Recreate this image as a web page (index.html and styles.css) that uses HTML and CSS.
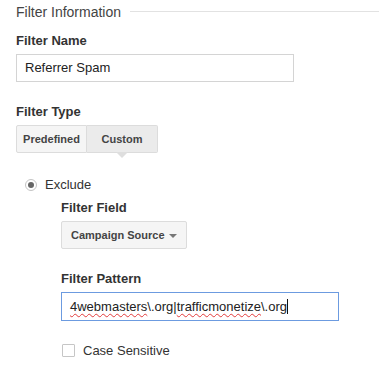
FILE: index.html
```html
<!DOCTYPE html>
<html lang="en">
<head>
    <meta charset="UTF-8">
    <title>Filter Information</title>
    <link rel="stylesheet" href="styles.css">
</head>
<body>
    <div class="legend">
        <span class="legend-text">Filter Information</span>
        <span class="legend-line"></span>
    </div>

    <div class="field-label first">Filter Name</div>
    <div class="text-input">Referrer Spam</div>

    <div class="field-label">Filter Type</div>
    <div class="segmented">
        <button class="seg-btn">Predefined</button>
        <button class="seg-btn active">Custom</button>
    </div>

    <div class="radio-row">
        <span class="radio"></span>
        <span class="radio-label">Exclude</span>
    </div>

    <div class="sub-options">
        <div class="field-label tight">Filter Field</div>
        <div class="select">
            <span>Campaign Source</span>
            <span class="select-arrow"></span>
        </div>

        <div class="field-label">Filter Pattern</div>
        <div class="text-input pattern"><span class="misspelled">4webmasters</span>\.org|<span class="misspelled">trafficmonetize</span>\.org<span class="caret"></span></div>

        <div class="check-row">
            <span class="checkbox"></span>
            <span class="check-label">Case Sensitive</span>
        </div>
    </div>
</body>
</html>
```

FILE: styles.css
```css
body {
    margin: 0;
    padding: 4px 0 0 16px;
    background: #fff;
    font-family: "Liberation Sans", Arial, sans-serif;
    color: #333;
}

.legend {
    display: flex;
    align-items: center;
    gap: 9px;
    height: 16px;
}

.legend-text {
    font-size: 14px;
    line-height: 16px;
    color: #444;
}

.legend-line {
    flex: 1;
    border-top: 1px solid #e2e2e2;
    margin-top: -1px;
}

.field-label {
    font-size: 13px;
    line-height: 15px;
    font-weight: bold;
    color: #333;
    margin-top: 22px;
}

.field-label.first {
    margin-top: 13px;
}

.field-label.tight {
    margin-top: 8px;
}

.text-input {
    box-sizing: border-box;
    width: 278px;
    height: 28px;
    margin-top: 6px;
    border: 1px solid #d4d4d4;
    padding: 0 8px;
    font-size: 13px;
    line-height: 26px;
    color: #222;
    white-space: nowrap;
}

.text-input.pattern {
    height: 29px;
    line-height: 27px;
    border-color: #6c9be0;
}

.misspelled {
    text-decoration: underline wavy #e23b3b;
    text-decoration-thickness: 1px;
    text-underline-offset: 2px;
}

.caret {
    display: inline-block;
    width: 1px;
    height: 15px;
    background: #111;
    vertical-align: -3px;
}

.segmented {
    display: flex;
    margin-top: 6px;
}

.seg-btn {
    position: relative;
    width: 71px;
    height: 28px;
    padding: 0;
    margin: 0;
    border: 1px solid #dcdcdc;
    background: #f5f5f5;
    font-family: inherit;
    font-size: 11px;
    font-weight: bold;
    color: #444;
    border-radius: 2px 0 0 2px;
}

.seg-btn.active {
    background: #ebebeb;
    border-left: none;
    border-radius: 0 2px 2px 0;
}

.seg-btn.active::after {
    content: "";
    position: absolute;
    left: 50%;
    bottom: -6px;
    margin-left: -6px;
    border-left: 6px solid transparent;
    border-right: 6px solid transparent;
    border-top: 6px solid #dedede;
}

.radio-row {
    display: flex;
    align-items: center;
    gap: 8px;
    margin-top: 24px;
    padding-left: 9px;
}

.radio {
    box-sizing: border-box;
    width: 12px;
    height: 12px;
    border: 1px solid #c4c4c4;
    border-radius: 50%;
    display: flex;
    align-items: center;
    justify-content: center;
}

.radio::after {
    content: "";
    width: 6px;
    height: 6px;
    border-radius: 50%;
    background: #666;
}

.radio-label,
.check-label {
    font-size: 13px;
    line-height: 15px;
    color: #333;
}

.sub-options {
    padding-left: 45px;
}

.select {
    box-sizing: border-box;
    width: 126px;
    height: 28px;
    margin-top: 6px;
    padding: 0 9px;
    border: 1px solid #dcdcdc;
    border-radius: 2px;
    background: #f5f5f5;
    display: flex;
    align-items: center;
    justify-content: space-between;
    font-size: 11px;
    font-weight: bold;
    color: #444;
}

.select-arrow {
    width: 0;
    height: 0;
    border-left: 4px solid transparent;
    border-right: 4px solid transparent;
    border-top: 4px solid #777;
    margin-top: 2px;
}

.check-row {
    display: flex;
    align-items: center;
    gap: 8px;
    margin-top: 22px;
    padding-left: 1px;
}

.checkbox {
    box-sizing: border-box;
    width: 13px;
    height: 13px;
    border: 1px solid #c6c6c6;
    border-radius: 1px;
}
```
